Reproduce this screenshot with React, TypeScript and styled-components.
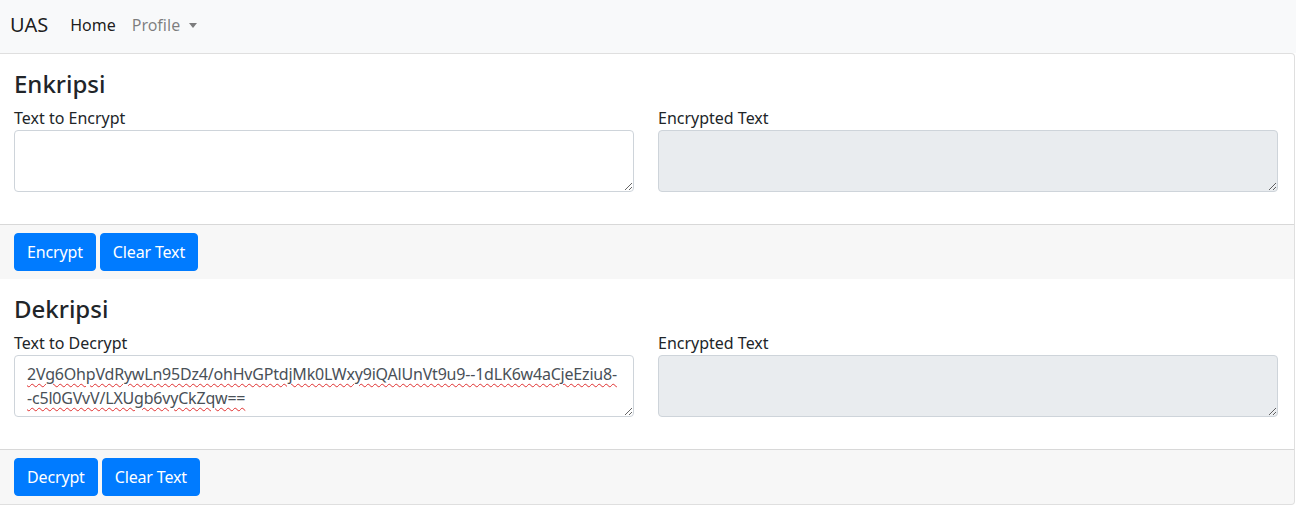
import styled, { createGlobalStyle } from "styled-components";

const GlobalStyle = createGlobalStyle`
  * {
    box-sizing: border-box;
  }
  body {
    margin: 0;
    background: #fff;
    color: #212529;
    font-family: "Noto Sans", "Open Sans", sans-serif;
    font-size: 16px;
    line-height: 1.5;
  }
`;

const Navbar = styled.nav`
  display: flex;
  align-items: center;
  height: 53px;
  padding: 0 10px 4px;
  background: #f8f9fa;
`;

const Brand = styled.span`
  font-size: 20px;
  color: rgba(0, 0, 0, 0.9);
  margin-right: 14px;
`;

const NavLink = styled.a<{ $active?: boolean }>`
  display: flex;
  align-items: center;
  padding: 0 8px;
  color: ${(p) => (p.$active ? "rgba(0, 0, 0, 0.9)" : "rgba(0, 0, 0, 0.5)")};
  text-decoration: none;
  cursor: pointer;
`;

const Caret = styled.span`
  display: inline-block;
  margin-left: 9px;
  margin-top: 1px;
  border-top: 5px solid rgba(0, 0, 0, 0.5);
  border-left: 4.5px solid transparent;
  border-right: 4.5px solid transparent;
`;

const Card = styled.div`
  margin-left: -3px;
  width: calc(100% + 2px);
  border: 1px solid rgba(0, 0, 0, 0.125);
  border-radius: 4px;
  background: #fff;
`;

const CardBody = styled.div`
  padding: 16px;
`;

const Title = styled.h4`
  margin: 0 0 8px;
  font-size: 24px;
  font-weight: 500;
  line-height: 28px;
`;

const Row = styled.div`
  display: grid;
  grid-template-columns: 1fr 1fr;
  column-gap: 24px;
  margin-bottom: 16px;
`;

const Field = styled.div`
  display: flex;
  flex-direction: column;
`;

const Label = styled.label`
  display: block;
  line-height: 24px;
`;

const TextArea = styled.textarea<{ $marked?: boolean }>`
  display: block;
  width: 100%;
  height: 62px;
  padding: 6px 12px;
  font-family: inherit;
  font-size: 16px;
  line-height: 24px;
  color: #495057;
  background: #fff;
  border: 1px solid #ced4da;
  border-radius: 4px;
  outline: none;
  ${(p) =>
    p.$marked &&
    `
    letter-spacing: -0.2px;
    text-decoration: underline wavy #e03030;
    text-decoration-thickness: 1px;
    text-underline-offset: 3px;
  `}

  &:read-only {
    background: #e9ecef;
  }
`;

const CardFooter = styled.div`
  display: flex;
  gap: 4px;
  padding: 8px 16px;
  background: rgba(0, 0, 0, 0.03);
  border-top: 1px solid rgba(0, 0, 0, 0.125);

  &:last-child {
    border-radius: 0 0 3px 3px;
  }
`;

const Button = styled.button`
  height: 38px;
  padding: 6px 12px;
  font-family: inherit;
  font-size: 16px;
  line-height: 24px;
  letter-spacing: -0.15px;
  color: #fff;
  background: #007bff;
  border: 1px solid #007bff;
  border-radius: 4px;
  cursor: pointer;
`;

const cipher =
  "2Vg6OhpVdRywLn95Dz4/ohHvGPtdjMk0LWxy9iQAlUnVt9u9--1dLK6w4aCjeEziu8--c5l0GVvV/LXUgb6vyCkZqw==";

const Section = ({
  title,
  inputLabel,
  action,
  value,
}: {
  title: string;
  inputLabel: string;
  action: string;
  value: string;
}) => (
  <>
    <CardBody>
      <Title>{title}</Title>
      <Row>
        <Field>
          <Label>{inputLabel}</Label>
          <TextArea defaultValue={value} $marked={!!value} spellCheck={false} />
        </Field>
        <Field>
          <Label>Encrypted Text</Label>
          <TextArea readOnly />
        </Field>
      </Row>
    </CardBody>
    <CardFooter>
      <Button>{action}</Button>
      <Button>Clear Text</Button>
    </CardFooter>
  </>
);

export default function App() {
  return (
    <>
      <GlobalStyle />
      <Navbar>
        <Brand>UAS</Brand>
        <NavLink $active>Home</NavLink>
        <NavLink>
          Profile
          <Caret />
        </NavLink>
      </Navbar>
      <Card>
        <Section title="Enkripsi" inputLabel="Text to Encrypt" action="Encrypt" value="" />
        <Section title="Dekripsi" inputLabel="Text to Decrypt" action="Decrypt" value={cipher} />
      </Card>
    </>
  );
}
